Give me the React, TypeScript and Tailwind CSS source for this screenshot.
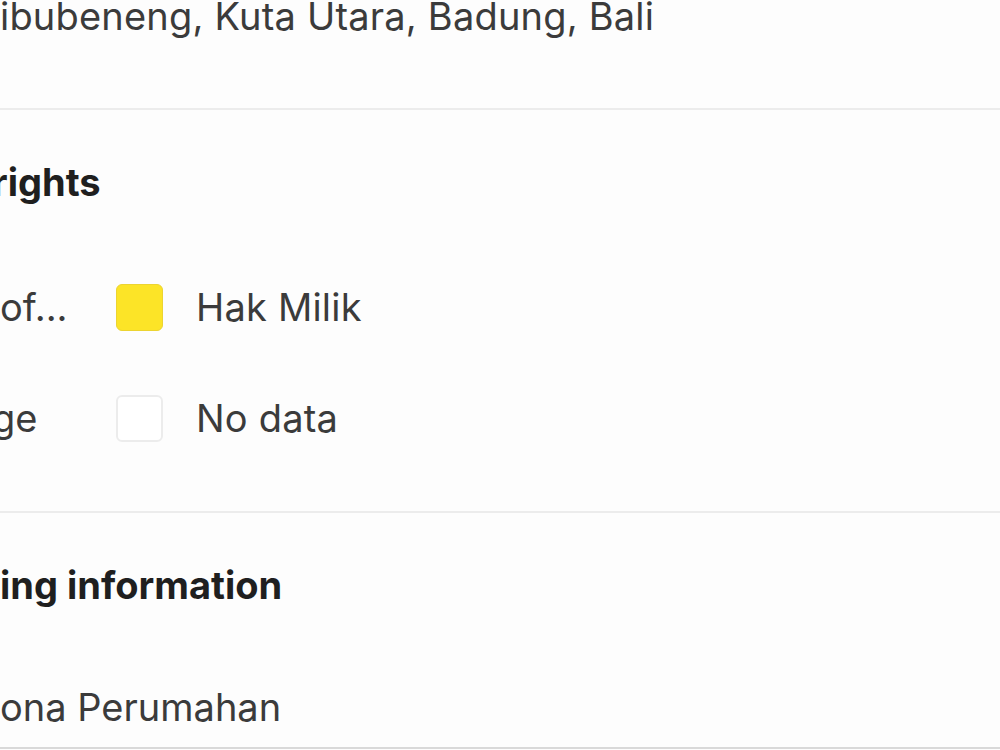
import React from "react";

export default function App() {
  const font = { fontFamily: "Inter, 'Noto Sans', sans-serif" };
  return (
    <div
      className="w-[1000px] h-[750px] overflow-hidden bg-[#fdfdfd] flex flex-col text-[#3b3b3b]"
      style={font}
    >
      <div className="h-[108px] shrink-0 overflow-hidden">
        <div className="text-[38px] leading-[32px] whitespace-nowrap tracking-[0.2px]">
          ibubeneng, Kuta Utara, Badung, Bali
        </div>
      </div>
      <div className="h-[2px] shrink-0 bg-[#ececec]" />
      <div className="h-[401px] shrink-0 flex flex-col overflow-hidden">
        <div className="mt-[52px] h-[40px] flex items-center text-[38px] font-bold text-[#1f1f1f] whitespace-nowrap ml-[-8px]">
          rights
        </div>
        <div className="mt-[81px] h-[48px] flex items-center">
          <div className="w-[116px] text-[38px] whitespace-nowrap">of...</div>
          <div className="w-[47px] h-[47px] rounded-[6px] bg-[#fce427] border border-[#ecd431]" />
          <div className="ml-[33px] text-[38px] whitespace-nowrap tracking-[0.2px]">Hak Milik</div>
        </div>
        <div className="mt-[63px] h-[48px] flex items-center">
          <div className="w-[116px] text-[38px] whitespace-nowrap">
            <span className="ml-[-8px]">ge</span>
          </div>
          <div className="w-[47px] h-[47px] rounded-[6px] bg-white border-2 border-[#ececec]" />
          <div className="ml-[33px] text-[38px] whitespace-nowrap tracking-[0.2px]">No data</div>
        </div>
      </div>
      <div className="h-[2px] shrink-0 bg-[#ececec]" />
      <div className="h-[234px] shrink-0 flex flex-col">
        <div className="mt-[52px] h-[40px] flex items-center text-[38px] font-bold text-[#1f1f1f] whitespace-nowrap">
          ing information
        </div>
        <div className="mt-[82px] h-[40px] flex items-center text-[38px] whitespace-nowrap">
          ona Perumahan
        </div>
      </div>
      <div className="h-[2px] shrink-0 bg-[#d9d9d9]" />
    </div>
  );
}
